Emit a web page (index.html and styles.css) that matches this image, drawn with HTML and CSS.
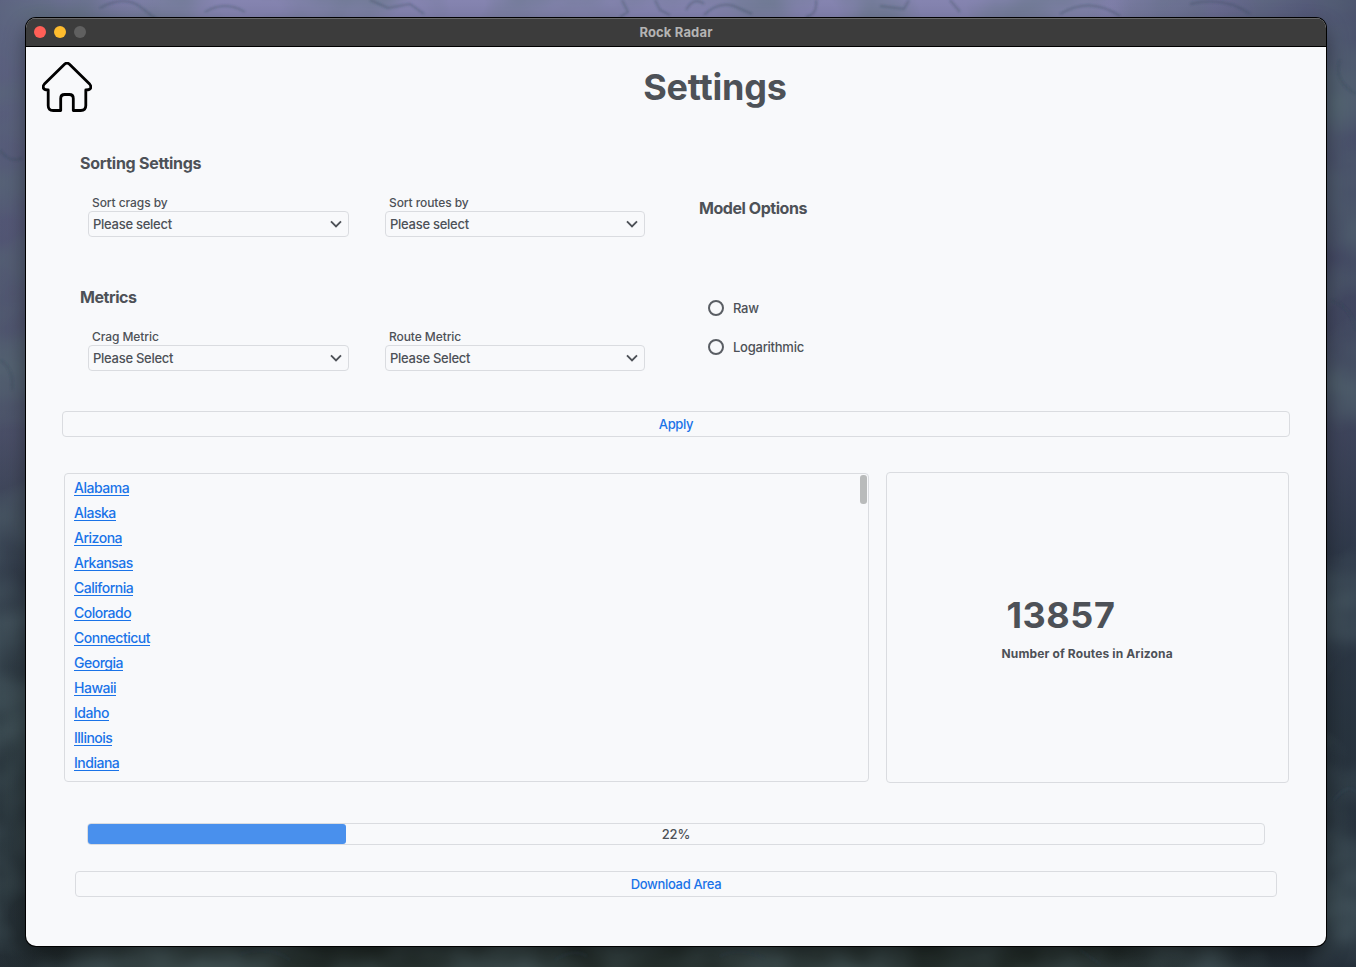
FILE: index.html
```html
<!DOCTYPE html>
<html lang="en">
<head>
<meta charset="utf-8">
<title>Rock Radar</title>
<link rel="stylesheet" href="styles.css">
</head>
<body class="desktop">
<svg class="wallpaper" viewBox="0 0 1356 967" aria-hidden="true">
  <defs>
    <filter id="clouds" x="0" y="0" width="100%" height="100%">
      <feTurbulence type="fractalNoise" baseFrequency="0.01 0.012" numOctaves="3" seed="8"/>
      <feColorMatrix values="0 0 0 0 0.1  0 0 0 0 0.16  0 0 0 0 0.18  1.2 0 0 0 -0.42"/>
    </filter>
    <filter id="soft"><feGaussianBlur stdDeviation="0.9"/></filter>
  </defs>
  <rect width="1356" height="967" filter="url(#clouds)"/>
  <g class="veins" filter="url(#soft)">
    <path d="M100 8q25-14 42 0t20 14M205 12q20-12 40 0M370 0l18 8 22-4 14 10M622 0l6 12-8 5M655 0l5 10 10 5M686 10q8-14 18-6M704 15q14-14 30-9l18 8M816 0q2 14-10 17M880 6l24 3 5-9M950 0l10 12M1060 14q30-18 60 2M1190 4q35-8 60 10M0 150q10 14 22 8M0 360q14 8 12 30M1340 60q-8 20 16 34M1332 300q20 8 24 30M1334 800q14-18 22-8M240 954q30-10 50 6M555 960q18-12 32-4M720 956q20-10 44 2M1080 950l20 14"/>
  </g>
</svg>
<div class="window">
  <div class="titlebar">
    <div class="lights"><i class="light red"></i><i class="light yellow"></i><i class="light gray"></i></div>
    <div class="window-title">Rock Radar</div>
  </div>
  <main class="content">
    <header class="header">
      <svg class="home" viewBox="0 0 50 50" role="img" aria-label="Home">
        <path d="M22.5 2.2Q25 .1 27.5 2.2L47.6 22Q49.2 24 48.7 26Q48 28 43.8 28V43.5Q43.8 48.5 38.8 48.5H31.3V36.5Q31.3 32.5 27.3 32.5H22.7Q18.7 32.5 18.7 36.5V48.5H11.2Q6.2 48.5 6.2 43.5V28Q2 28 1.3 26Q.8 24 2.4 22Z"/>
      </svg>
      <h1 class="page-title">Settings</h1>
    </header>
    <div class="options">
      <div class="sections">
        <section>
          <h2 class="heading sorting">Sorting Settings</h2>
          <div class="fields">
            <div class="field"><span class="label">Sort crags by</span><div class="select"><span>Please select</span><svg class="chevron" viewBox="0 0 12 8"><path d="M1 1.3 6 6.3 11 1.3"/></svg></div></div>
            <div class="field"><span class="label">Sort routes by</span><div class="select"><span>Please select</span><svg class="chevron" viewBox="0 0 12 8"><path d="M1 1.3 6 6.3 11 1.3"/></svg></div></div>
          </div>
        </section>
        <section>
          <h2 class="heading">Metrics</h2>
          <div class="fields">
            <div class="field"><span class="label">Crag Metric</span><div class="select"><span>Please Select</span><svg class="chevron" viewBox="0 0 12 8"><path d="M1 1.3 6 6.3 11 1.3"/></svg></div></div>
            <div class="field"><span class="label">Route Metric</span><div class="select"><span>Please Select</span><svg class="chevron" viewBox="0 0 12 8"><path d="M1 1.3 6 6.3 11 1.3"/></svg></div></div>
          </div>
        </section>
      </div>
      <section class="model">
        <h2 class="heading">Model Options</h2>
        <div class="radios">
          <div class="radio"><i class="circle"></i><span>Raw</span></div>
          <div class="radio"><i class="circle"></i><span>Logarithmic</span></div>
        </div>
      </section>
    </div>
    <div class="button apply">Apply</div>
    <div class="panels">
      <div class="list">
        <div class="links">
          <a>Alabama</a><a>Alaska</a><a>Arizona</a><a>Arkansas</a><a>California</a><a>Colorado</a><a>Connecticut</a><a>Georgia</a><a>Hawaii</a><a>Idaho</a><a>Illinois</a><a>Indiana</a>
        </div>
        <div class="thumb"></div>
      </div>
      <div class="stat">
        <div class="stat-body">
          <div class="number">13857</div>
          <div class="caption">Number of Routes in Arizona</div>
        </div>
      </div>
    </div>
    <div class="progress"><div class="bar" style="width:21.93%"></div><span class="percent">22%</span></div>
    <div class="button download">Download Area</div>
  </main>
</div>
</body>
</html>
```
FILE: styles.css
```css
* { box-sizing: border-box; }
.desktop {
  margin: 0;
  width: 1356px;
  height: 967px;
  padding: 18px 30px 21px 26px;
  overflow: hidden;
  position: relative;
  font-family: Inter, "Liberation Sans", sans-serif;
  font-size: 13px;
  color: #4d5157;
  background:
    linear-gradient(90deg, rgba(35,45,65,.4), transparent 12%, transparent 80%, rgba(35,45,65,.6)),
    linear-gradient(#8584b0 0, #74749a 20%, #62647f 45%, #3f4956 57%, #2f3d3c 75%, #242e2b 100%);
}
.wallpaper { position: absolute; inset: 0; width: 1356px; height: 967px; }
.veins path { fill: none; stroke: #36475a; stroke-width: 2; opacity: .35; }
.window {
  position: relative;
  width: 1300px;
  height: 928px;
  border-radius: 10px;
  overflow: hidden;
  background: #f8f9fb;
  box-shadow: 0 0 0 1px #000, 0 10px 22px 0 rgba(0,0,0,.45);
}
.titlebar {
  height: 29px;
  display: grid;
  grid-template-columns: 80px 1fr 80px;
  align-items: center;
  padding-bottom: 2px;
  background: #3c3c3c;
  border-top: 1px solid #696969;
  border-bottom: 1px solid #000;
}
.lights { display: flex; gap: 8px; padding-left: 8px; }
.light { width: 12px; height: 12px; border-radius: 50%; }
.red { background: #ff5f57; }
.yellow { background: #febc2e; }
.gray { background: #606060; }
.window-title { text-align: center; font-weight: 700; color: #b4b4b4; line-height: 16px; letter-spacing: .15px; }
.header {
  height: 102px;
  padding: 15px 16px 0;
  display: grid;
  grid-template-columns: 50px 1fr;
  align-items: start;
}
.home { width: 50px; height: 50px; }
.home path { fill: none; stroke: #000; stroke-width: 2.8; stroke-linejoin: round; }
.page-title { margin: 0; padding-left: 28px; text-align: center; font-size: 36px; line-height: 50px; font-weight: 700; letter-spacing: -.2px; }
.options { display: flex; gap: 54px; padding-left: 54px; height: 222px; }
.sections { width: 565px; display: flex; flex-direction: column; gap: 46px; }
.heading { margin: 0; font-size: 16px; line-height: 28px; font-weight: 700; letter-spacing: -.45px; }
.sorting { letter-spacing: -.28px; }
.fields { display: grid; grid-template-columns: 261px 260px; gap: 36px; padding: 18px 0 0 8px; }
.label { display: block; padding-left: 4px; font-size: 12px; line-height: 16px; font-weight: 500; letter-spacing: -.08px; }
.select {
  height: 26px;
  border: 1px solid #dadce0;
  border-radius: 4px;
  display: flex;
  align-items: center;
  justify-content: space-between;
  padding: 0 6px 0 4px;
  font-weight: 500;
  letter-spacing: -.27px;
}
.chevron { width: 12px; height: 8px; }
.chevron path { fill: none; stroke: #4d5157; stroke-width: 1.9; }
.model { padding-top: 45px; }
.radios { padding: 77px 0 0 9px; display: grid; gap: 21px; }
.radio { display: flex; align-items: center; gap: 9px; height: 18px; font-weight: 500; letter-spacing: -.25px; }
.circle { width: 16px; height: 16px; border: 2px solid #5a5e64; border-radius: 50%; }
.button {
  height: 26px;
  border: 1px solid #dadce0;
  border-radius: 4px;
  display: flex;
  align-items: center;
  justify-content: center;
  color: #1a73e8;
  font-weight: 500;
  letter-spacing: -.33px;
}
.apply { margin: 40px 36px 0; }
.panels { display: grid; grid-template-columns: 805px 403px; gap: 17px; padding: 35px 37px 0 38px; }
.list { margin: 1px 0; height: 309px; border: 1px solid #dadce0; border-radius: 4px; display: flex; justify-content: space-between; padding: 2px 1px 0 9px; }
.links { display: flex; flex-direction: column; align-items: flex-start; gap: 9px; padding-top: 4px; }
.links a { height: 16px; line-height: 16px; font-size: 14px; font-weight: 500; letter-spacing: -.49px; color: #1a73e8; border-bottom: 1px solid #1a73e8; }
.thumb { width: 7px; height: 29px; margin-top: -1px; border-radius: 3px; background: #b9bbbb; }
.stat { height: 311px; border: 1px solid #dadce0; border-radius: 4px; display: flex; justify-content: center; padding-top: 120px; }
.stat-body { width: 172px; }
.number { font-size: 36px; line-height: 44px; font-weight: 700; padding-left: 5px; letter-spacing: .55px; }
.caption { margin-top: 8px; font-size: 12px; line-height: 18px; font-weight: 700; white-space: nowrap; letter-spacing: .13px; }
.progress { margin: 40px 61px 0; height: 22px; border: 1px solid #dadce0; border-radius: 4px; display: grid; align-items: center; }
.bar { grid-area: 1 / 1; height: 20px; border-radius: 3px; background: #4990ed; }
.percent { grid-area: 1 / 1; text-align: center; font-weight: 500; letter-spacing: -.1px; }
.download { margin: 26px 49px 0; }
```
